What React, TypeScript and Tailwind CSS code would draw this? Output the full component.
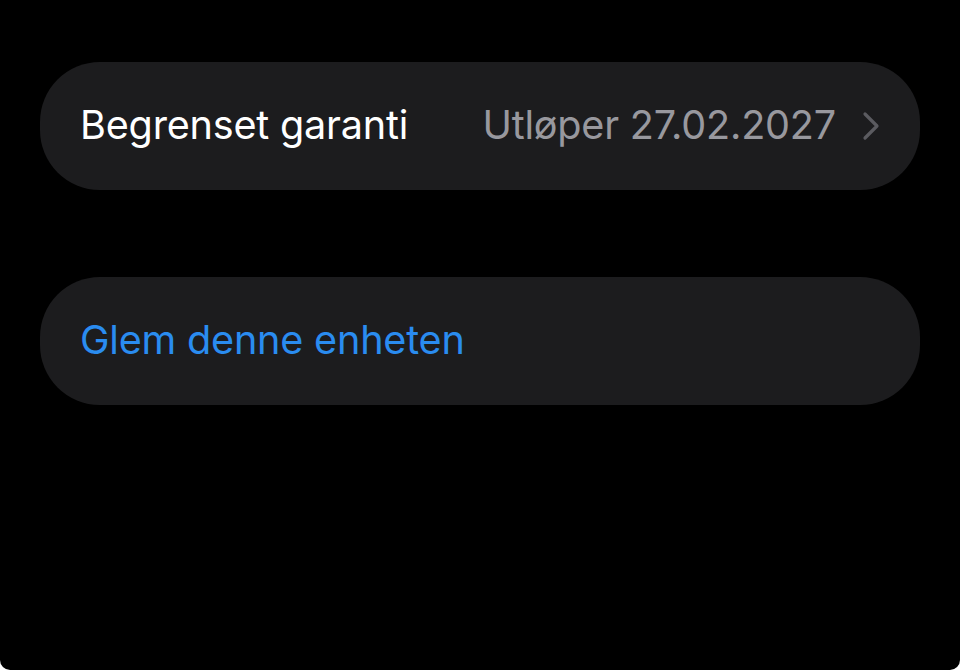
const font = { fontFamily: 'Inter, "Liberation Sans", sans-serif' };

function Chevron() {
    return (
        <svg width="18" height="30" viewBox="0 0 18 30" fill="none" className="shrink-0">
            <path d="M3 3 L15 15 L3 27" stroke="#5b5b60" strokeWidth="3.2" strokeLinecap="round" strokeLinejoin="round" />
        </svg>
    );
}

export default function App() {
    return (
        <div className="w-[960px] h-[670px] bg-white">
            <div
                className="w-full h-full bg-black rounded-b-[10px] px-[40px] pt-[62px] flex flex-col gap-[87px]"
                style={font}
            >
                <div className="h-[128px] rounded-[60px] bg-[#1c1c1e] flex items-center pl-[40px] pr-[40px]">
                    <span className="text-[39.6px] text-white tracking-[-0.2px]">Begrenset garanti</span>
                    <span className="ml-auto text-[39.6px] text-[#98989e] tracking-[-0.2px]">Utløper 27.02.2027</span>
                    <span className="ml-[26px]">
                        <Chevron />
                    </span>
                </div>
                <div className="h-[128px] rounded-[60px] bg-[#1c1c1e] flex items-center pl-[40px]">
                    <span className="text-[39.6px] text-[#2a8cf0] tracking-[-0.2px]">Glem denne enheten</span>
                </div>
            </div>
        </div>
    );
}
